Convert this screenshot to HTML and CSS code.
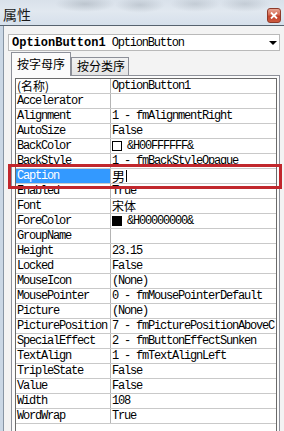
FILE: index.html
```html
<!DOCTYPE html>
<html lang="zh">
<head>
<meta charset="utf-8">
<title>属性</title>
<link rel="stylesheet" href="styles.css">
</head>
<body>
<div class="window">
  <div class="titlebar">
    <span class="title">属性</span>
    <span class="close"><svg width="8" height="7" viewBox="0 0 8 7"><path d="M1 0.5 L7 6.5 M7 0.5 L1 6.5" stroke="#fff" stroke-width="1.8" fill="none"/></svg></span>
  </div>
  <div class="frame">
    <div class="panel">
      <div class="combo"><span class="obj"><b class="objname">OptionButton1</b> OptionButton</span><span class="arrow"></span></div>
      <div class="tabs">
        <div class="tab active">按字母序</div>
        <div class="tab">按分类序</div>
        <div class="tab-fill"></div>
      </div>
      <div class="tabpage">
        <div class="grid">
          <div class="row"><div class="name"><span class="cjk">(名称)</span></div><div class="val">OptionButton1</div></div>
          <div class="row"><div class="name">Accelerator</div><div class="val"></div></div>
          <div class="row"><div class="name">Alignment</div><div class="val">1 - fmAlignmentRight</div></div>
          <div class="row"><div class="name">AutoSize</div><div class="val">False</div></div>
          <div class="row"><div class="name">BackColor</div><div class="val"><span class="swatch white"></span>&amp;H00FFFFFF&amp;</div></div>
          <div class="row"><div class="name">BackStyle</div><div class="val">1 - fmBackStyleOpaque</div></div>
          <div class="row selected"><div class="name">Caption</div><div class="val"><span class="cjk big">男</span><span class="caret"></span></div></div>
          <div class="row"><div class="name">Enabled</div><div class="val">True</div></div>
          <div class="row"><div class="name">Font</div><div class="val"><span class="cjk">宋体</span></div></div>
          <div class="row"><div class="name">ForeColor</div><div class="val"><span class="swatch black"></span>&amp;H00000000&amp;</div></div>
          <div class="row"><div class="name">GroupName</div><div class="val"></div></div>
          <div class="row"><div class="name">Height</div><div class="val">23.15</div></div>
          <div class="row"><div class="name">Locked</div><div class="val">False</div></div>
          <div class="row"><div class="name">MouseIcon</div><div class="val">(None)</div></div>
          <div class="row"><div class="name">MousePointer</div><div class="val">0 - fmMousePointerDefault</div></div>
          <div class="row"><div class="name">Picture</div><div class="val">(None)</div></div>
          <div class="row"><div class="name">PicturePosition</div><div class="val">7 - fmPicturePositionAboveC</div></div>
          <div class="row"><div class="name">SpecialEffect</div><div class="val">2 - fmButtonEffectSunken</div></div>
          <div class="row"><div class="name">TextAlign</div><div class="val">1 - fmTextAlignLeft</div></div>
          <div class="row"><div class="name">TripleState</div><div class="val">False</div></div>
          <div class="row"><div class="name">Value</div><div class="val">False</div></div>
          <div class="row"><div class="name">Width</div><div class="val">108</div></div>
          <div class="row"><div class="name">WordWrap</div><div class="val">True</div></div>
        </div>
      </div>
    </div>
  </div>
  <div class="highlight"></div>
</div>
</body>
</html>
```

FILE: styles.css
```css
html, body {
  margin: 0;
  padding: 0;
}
body {
  width: 284px;
  height: 431px;
  overflow: hidden;
  background: #cad7e5;
}
.window {
  position: relative;
  width: 284px;
  height: 431px;
  overflow: hidden;
}
.titlebar {
  height: 25px;
  border-bottom: 1px solid #56626e;
  display: flex;
  align-items: flex-start;
  justify-content: space-between;
  background:
    radial-gradient(ellipse 30px 8px at 85px 4px, rgba(150,160,170,0.45), rgba(150,160,170,0) 100%),
    radial-gradient(ellipse 25px 8px at 140px 5px, rgba(150,160,170,0.4), rgba(150,160,170,0) 100%),
    radial-gradient(ellipse 25px 8px at 195px 4px, rgba(150,160,170,0.35), rgba(150,160,170,0) 100%),
    radial-gradient(ellipse 25px 8px at 245px 4px, rgba(150,160,170,0.35), rgba(150,160,170,0) 100%),
    linear-gradient(180deg, #d9e1ea 0%, #e1e8f0 45%, #d6e0eb 100%);
}
.title {
  margin: 5px 0 0 3px;
  font-family: "Noto Sans CJK SC", sans-serif;
  font-size: 14px;
  line-height: 18px;
  color: #1a1a1a;
}
.close {
  margin: 8px 3px 0 0;
  width: 14px;
  height: 15px;
  box-sizing: border-box;
  border: 1px solid #8e3a2a;
  border-radius: 3px;
  background: linear-gradient(180deg, #e7a594 0%, #d66a52 45%, #c2412a 55%, #cc5a3f 100%);
  display: flex;
  align-items: center;
  justify-content: center;
}
.close svg {
  display: block;
}
.frame {
  display: flex;
  padding-left: 3px;
  height: 405px;
}
.panel {
  flex: 1;
  border-left: 1px solid #8795a4;
  background: #f3f3f3;
  padding: 8px 0 0 4px;
}
.combo {
  width: 272px;
  height: 17px;
  box-sizing: border-box;
  border: 1px solid #b9b9b9;
  background: #fff;
  display: flex;
  align-items: center;
  padding-left: 3px;
  font-family: "Liberation Mono", "Noto Sans CJK SC", monospace;
  font-size: 12px;
  letter-spacing: -1.2px;
  color: #000;
}
.objname {
  letter-spacing: 0;
}
.arrow {
  margin-left: auto;
  margin-right: 2px;
  width: 0;
  height: 0;
  border-left: 4px solid transparent;
  border-right: 4px solid transparent;
  border-top: 4px solid #000;
}
.tabs {
  margin-top: 1px;
  width: 272px;
  height: 24px;
  box-sizing: border-box;
  padding-left: 3px;
  display: flex;
  align-items: flex-end;
}
.tab {
  width: 58px;
  height: 19px;
  box-sizing: border-box;
  border: 1px solid #8d9099;
  background: linear-gradient(180deg, #f2f2f2 0%, #e4e4e4 100%);
  font-family: "Noto Sans CJK SC", sans-serif;
  font-size: 12px;
  line-height: 16px;
  text-align: center;
  color: #000;
  padding-left: 2px;
}
.tab.active {
  width: 60px;
  height: 24px;
  border-bottom: none;
  background: #fbfbfb;
  line-height: 22px;
  padding-left: 0;
}
.tab-fill {
  flex: 1;
  height: 0;
  border-bottom: 1px solid #8d9099;
}
.tabpage {
  margin-left: 3px;
  width: 269px;
  height: 380px;
  box-sizing: border-box;
  border: 1px solid #8d9099;
  border-top: none;
  background: #fbfbfb;
  padding: 2px 2px 0 3px;
}
.grid {
  width: 262px;
  height: 400px;
  box-sizing: border-box;
  border: 1px solid #6a6a6a;
  background: #fff;
  overflow: hidden;
  font-family: "Liberation Mono", "Noto Sans CJK SC", monospace;
  font-size: 12px;
  letter-spacing: -1.2px;
  color: #000;
}
.row {
  display: flex;
  height: 15px;
  box-sizing: border-box;
  border-bottom: 1px solid #c9c9c9;
}
.name {
  width: 95px;
  flex: none;
  box-sizing: border-box;
  border-right: 1px solid #b4b4b4;
  padding-left: 1px;
  line-height: 14px;
  white-space: nowrap;
}
.val {
  flex: 1;
  min-width: 0;
  padding-left: 1px;
  line-height: 14px;
  white-space: nowrap;
  display: flex;
  align-items: center;
}
.cjk {
  font-family: "Noto Sans CJK SC", sans-serif;
  letter-spacing: 0;
  font-size: 12px;
  line-height: 14px;
}
.cjk.big {
  font-size: 13px;
}
.caret {
  display: inline-block;
  width: 1px;
  height: 12px;
  background: #000;
  margin-left: 1px;
}
.swatch {
  display: inline-block;
  width: 10px;
  height: 10px;
  box-sizing: border-box;
  border: 1px solid #000;
  margin-right: 5px;
  flex: none;
}
.swatch.white { background: #fff; }
.swatch.black { background: #000; }
.row.selected .name {
  background: #3399ff;
  color: #fff;
}
.highlight {
  position: absolute;
  left: 8px;
  top: 164px;
  width: 274px;
  height: 25px;
  box-sizing: border-box;
  border: 3px solid #c1272d;
}
```
